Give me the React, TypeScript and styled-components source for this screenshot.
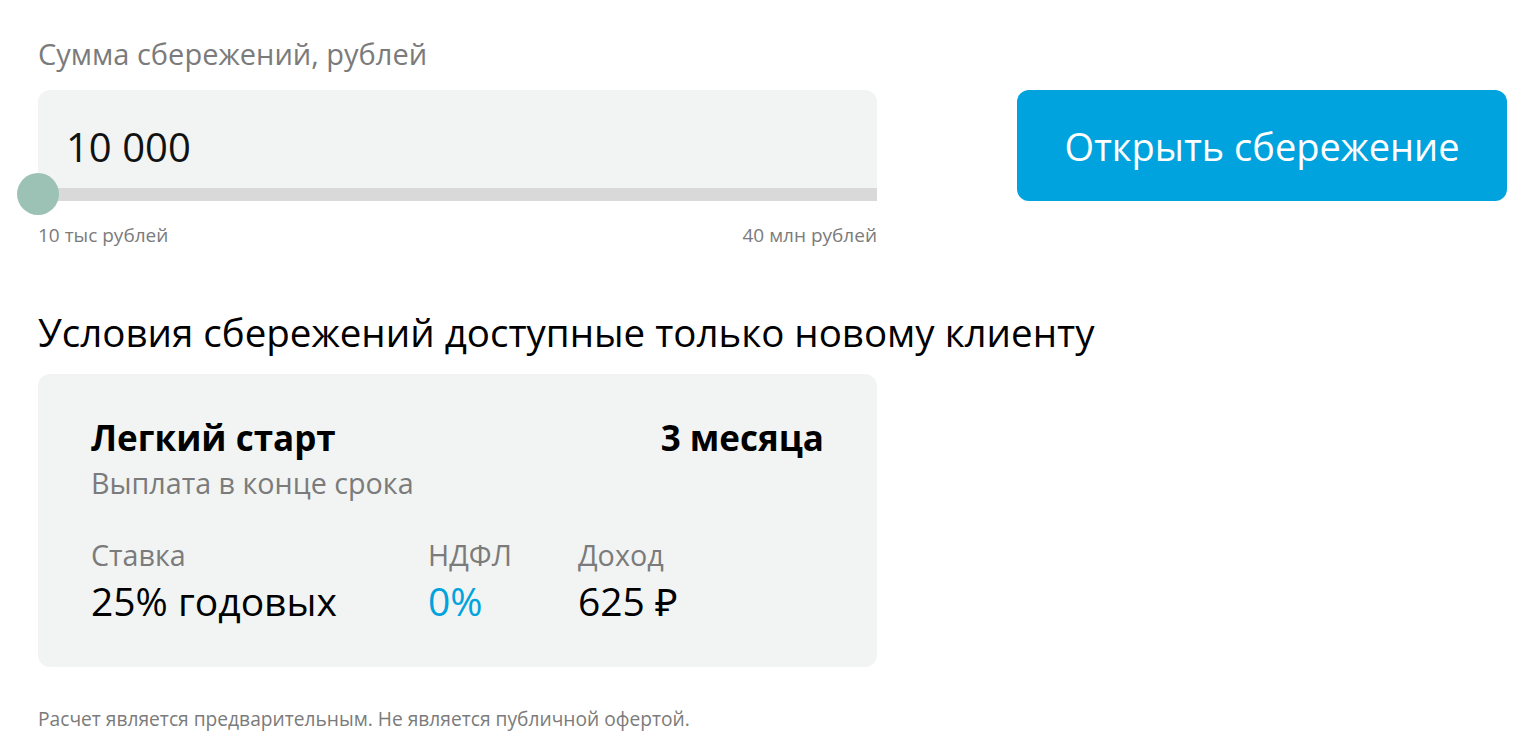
import React from "react";
import styled, { createGlobalStyle } from "styled-components";

const Global = createGlobalStyle`
  html, body { margin: 0; padding: 0; background: #ffffff; }
  body { font-family: "Open Sans", "Noto Sans", sans-serif; color: #000; }
`;

const Page = styled.div`
  padding: 34px 0 0 38px;
`;

const TopRow = styled.div`
  display: flex;
  align-items: flex-start;
  gap: 140px;
`;

const AmountColumn = styled.div`
  width: 839px;
  display: flex;
  flex-direction: column;
`;

const FieldLabel = styled.div`
  font-size: 29px;
  line-height: 40px;
  color: #7b7b7b;
  margin-bottom: 16px;
`;

const InputBox = styled.div`
  position: relative;
  height: 98px;
  box-sizing: border-box;
  background: #f2f4f3;
  border-radius: 12px 12px 0 0;
  display: flex;
  align-items: center;
  padding: 14px 0 0 28px;
  font-size: 40px;
  color: #111;
`;

const Track = styled.div`
  position: relative;
  height: 13px;
  background: #d9d9d9;
`;

const Thumb = styled.div`
  position: absolute;
  left: -21px;
  top: -15px;
  width: 42px;
  height: 42px;
  border-radius: 50%;
  background: #9cc1b5;
`;

const RangeLabels = styled.div`
  display: flex;
  justify-content: space-between;
  font-size: 19px;
  line-height: 24px;
  color: #7b7b7b;
  margin-top: 22px;
`;

const OpenButton = styled.button`
  margin-top: 56px;
  width: 490px;
  height: 111px;
  border: none;
  border-radius: 12px;
  background: #00a3dd;
  color: #fff;
  font-family: inherit;
  font-size: 38px;
  cursor: pointer;
`;

const Heading = styled.h2`
  margin: 58px 0 0 0;
  font-size: 38.5px;
  font-weight: 400;
  line-height: 54px;
`;

const Card = styled.div`
  margin-top: 15px;
  width: 839px;
  height: 293px;
  box-sizing: border-box;
  background: #f2f4f3;
  border-radius: 12px;
  padding: 39px 53px 0 53px;
`;

const CardHead = styled.div`
  display: flex;
  justify-content: space-between;
  align-items: baseline;
  font-size: 35px;
  font-weight: 700;
  line-height: 50px;
`;

const Sub = styled.div`
  font-size: 28.7px;
  line-height: 40px;
  color: #7b7b7b;
`;

const Stats = styled.div`
  display: grid;
  grid-template-columns: 337px 150px auto;
  margin-top: 32px;
`;

const Stat = styled.div`
  display: flex;
  flex-direction: column;
`;

const StatValue = styled.div<{ $accent?: boolean }>`
  font-size: 39px;
  line-height: 52px;
  color: ${(p) => (p.$accent ? "#00a3dd" : "#000")};
`;

const Note = styled.div`
  margin-top: 40px;
  font-size: 19.2px;
  line-height: 24px;
  color: #7b7b7b;
`;

export default function App() {
  return (
    <>
      <Global />
      <Page>
        <TopRow>
          <AmountColumn>
            <FieldLabel>Сумма сбережений, рублей</FieldLabel>
            <InputBox>10 000</InputBox>
            <Track>
              <Thumb />
            </Track>
            <RangeLabels>
              <span>10 тыс рублей</span>
              <span>40 млн рублей</span>
            </RangeLabels>
          </AmountColumn>
          <OpenButton>Открыть сбережение</OpenButton>
        </TopRow>
        <Heading>Условия сбережений доступные только новому клиенту</Heading>
        <Card>
          <CardHead>
            <span>Легкий старт</span>
            <span>3 месяца</span>
          </CardHead>
          <Sub>Выплата в конце срока</Sub>
          <Stats>
            <Stat>
              <Sub>Ставка</Sub>
              <StatValue>25% годовых</StatValue>
            </Stat>
            <Stat>
              <Sub>НДФЛ</Sub>
              <StatValue $accent>0%</StatValue>
            </Stat>
            <Stat>
              <Sub>Доход</Sub>
              <StatValue>625 ₽</StatValue>
            </Stat>
          </Stats>
        </Card>
        <Note>Расчет является предварительным. Не является публичной офертой.</Note>
      </Page>
    </>
  );
}
